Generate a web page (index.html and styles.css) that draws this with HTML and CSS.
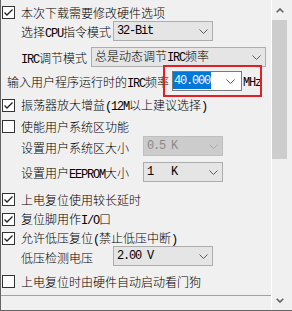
FILE: index.html
```html
<!DOCTYPE html>
<html>
<head>
<meta charset="utf-8">
<link rel="stylesheet" href="styles.css">
</head>
<body>
<div class="win">
  <div class="pane">
    <div class="rows">
      <div class="row chk r1"><svg class="cb" width="13" height="13" viewBox="0 0 13 13"><rect x="0.5" y="0.5" width="12" height="12" class="cb-box"/><polyline points="2.5,6.5 5,9 10.5,3.5" class="cb-mark"/></svg><span class="txt">本次下载需要修改硬件选项</span></div>
      <div class="row sel r2"><span class="lbl w92">选择<span class="lat">CPU</span>指令模式</span><div class="combo cw100"><span class="val lat">32-Bit</span><svg class="chev" width="9" height="5" viewBox="0 0 9 5"><polyline points="0.5,0.5 4.5,4.5 8.5,0.5"/></svg></div></div>
      <div class="row sel r3"><span class="lbl w70"><span class="lat">IRC</span>调节模式</span><div class="combo cw175"><span class="val">总是动态调节<span class="lat">IRC</span>频率</span><svg class="chev" width="9" height="5" viewBox="0 0 9 5"><polyline points="0.5,0.5 4.5,4.5 8.5,0.5"/></svg></div></div>
      <div class="row sel r4"><span class="lbl lbl-freq">输入用户程序运行时的<span class="lat">IRC</span>频率</span><div class="combo edit"><span class="hl lat">40.000</span><svg class="chev chev-edit" width="9" height="5" viewBox="0 0 9 5"><polyline points="0.5,0.5 4.5,4.5 8.5,0.5"/></svg></div><span class="unit lat">MHz</span></div>
      <div class="row chk r5"><svg class="cb" width="13" height="13" viewBox="0 0 13 13"><rect x="0.5" y="0.5" width="12" height="12" class="cb-box"/><polyline points="2.5,6.5 5,9 10.5,3.5" class="cb-mark"/></svg><span class="txt">振荡器放大增益<span class="lat">(12M</span>以上建议选择<span class="lat">)</span></span></div>
      <div class="row chk r6"><svg class="cb" width="13" height="13" viewBox="0 0 13 13"><rect x="0.5" y="0.5" width="12" height="12" class="cb-box"/></svg><span class="txt">使能用户系统区功能</span></div>
      <div class="row sel r7"><span class="lbl w122">设置用户系统区大小</span><div class="combo cw80 disabled"><span class="val lat">0.5 K</span><svg class="chev" width="9" height="5" viewBox="0 0 9 5"><polyline points="0.5,0.5 4.5,4.5 8.5,0.5"/></svg></div></div>
      <div class="row sel r8"><span class="lbl w122">设置用户<span class="lat">EEPROM</span>大小</span><div class="combo cw80"><span class="val lat">1&nbsp;&nbsp;&nbsp;K</span><svg class="chev" width="9" height="5" viewBox="0 0 9 5"><polyline points="0.5,0.5 4.5,4.5 8.5,0.5"/></svg></div></div>
      <div class="row chk r9"><svg class="cb" width="13" height="13" viewBox="0 0 13 13"><rect x="0.5" y="0.5" width="12" height="12" class="cb-box"/><polyline points="2.5,6.5 5,9 10.5,3.5" class="cb-mark"/></svg><span class="txt">上电复位使用较长延时</span></div>
      <div class="row chk r10"><svg class="cb" width="13" height="13" viewBox="0 0 13 13"><rect x="0.5" y="0.5" width="12" height="12" class="cb-box"/><polyline points="2.5,6.5 5,9 10.5,3.5" class="cb-mark"/></svg><span class="txt">复位脚用作<span class="lat">I/O</span>口</span></div>
      <div class="row chk r11"><svg class="cb" width="13" height="13" viewBox="0 0 13 13"><rect x="0.5" y="0.5" width="12" height="12" class="cb-box"/><polyline points="2.5,6.5 5,9 10.5,3.5" class="cb-mark"/></svg><span class="txt">允许低压复位<span class="lat">(</span>禁止低压中断<span class="lat">)</span></span></div>
      <div class="row sel r12"><span class="lbl w92">低压检测电压</span><div class="combo cw100"><span class="val lat">2.00 V</span><svg class="chev" width="9" height="5" viewBox="0 0 9 5"><polyline points="0.5,0.5 4.5,4.5 8.5,0.5"/></svg></div></div>
      <div class="row chk r13"><svg class="cb" width="13" height="13" viewBox="0 0 13 13"><rect x="0.5" y="0.5" width="12" height="12" class="cb-box"/></svg><span class="txt">上电复位时由硬件自动启动看门狗</span></div>
    </div>
    <div class="sep"></div>
  </div>
  <div class="sb">
    <div class="sb-btn sb-up"><svg width="8" height="5" viewBox="0 0 8 5"><polyline points="0.7,4.3 4,1 7.3,4.3"/></svg></div>
    <div class="thumb"></div>
    <div class="track"></div>
    <div class="sb-btn sb-down"><svg width="8" height="5" viewBox="0 0 8 5"><polyline points="0.7,0.7 4,4 7.3,0.7"/></svg></div>
  </div>
  <div class="edge"></div>
  <div class="mark"></div>
</div>
</body>
</html>
```
FILE: styles.css
```css
html, body {
  margin: 0;
  padding: 0;
  background: #f0f0f0;
}
body {
  font-family: "Noto Sans CJK SC", "Noto Sans", sans-serif;
  font-size: 12px;
  font-weight: 300;
  color: #000;
}
.win {
  position: relative;
  width: 292px;
  height: 311px;
  box-sizing: border-box;
  border-left: 1px solid #646464;
  border-bottom: 1px solid #646464;
  display: flex;
  background: #f0f0f0;
  overflow: hidden;
}
.pane {
  width: 270px;
  display: flex;
  flex-direction: column;
}
.rows {
  flex: 1;
  display: flex;
  flex-direction: column;
}
.row {
  display: flex;
  align-items: center;
  white-space: nowrap;
  line-height: 14px;
}
.chk { height: 13px; padding-left: 1px; }
.sel { height: 20px; }
.r1 { margin-top: 6px; }
.r2 { margin-top: 2px; }
.r3 { margin-top: 6px; }
.r4 { margin-top: 4px; }
.r5 { margin-top: 8px; }
.r6 { margin-top: 8px; }
.r7 { margin-top: 3px; }
.r8 { margin-top: 6px; }
.r9 { margin-top: 11px; }
.r10 { margin-top: 7px; }
.r11 { margin-top: 6px; }
.r12 { margin-top: 1px; }
.r13 { margin-top: 9px; }

.cb { flex: none; }
.cb-box { fill: #fff; stroke: #333; stroke-width: 1; }
.cb-mark { fill: none; stroke: #222; stroke-width: 1.3; }
.txt { margin-left: 6px; }

.lat {
  font-family: "Liberation Mono", "DejaVu Sans Mono", monospace;
  font-size: 12px;
  font-weight: 400;
  letter-spacing: -1.2px;
}

.lbl {
  box-sizing: border-box;
  padding-left: 20px;
  padding-top: 3px;
  flex: none;
}
.w92 { width: 112px; }
.w70 { width: 90px; }
.w122 { width: 142px; }
.lbl-freq { padding-left: 6px; width: 171px; }

.combo {
  box-sizing: border-box;
  height: 20px;
  border: 1px solid #adadad;
  background: #e5e5e5;
  display: flex;
  align-items: center;
  padding-left: 3px;
  flex: none;
}
.cw100 { width: 100px; }
.cw175 { width: 175px; }
.cw80 { width: 80px; }
.combo.disabled {
  background: #cccccc;
  border-color: #bfbfbf;
  color: #8a8a8a;
}
.combo.disabled .chev polyline { stroke: #a8a8a8; }
.chev { margin-left: auto; margin-right: 4px; flex: none; }
.chev polyline { fill: none; stroke: #5a5a5a; stroke-width: 1; }

.combo.edit {
  width: 70px;
  background: #fff;
  border-color: #7a7a7a;
  padding-left: 0;
  align-items: stretch;
}
.hl {
  background: #0078d7;
  color: #fff;
  width: 38px;
  box-sizing: border-box;
  padding-left: 1px;
  margin: 0 0 1px 0;
  display: flex;
  align-items: center;
}
.chev-edit { align-self: center; margin-right: 6px; }
.unit { margin-left: 1px; padding-top: 3px; }

.sep {
  height: 14px;
  border-top: 1px solid #a0a0a0;
}

.sb {
  width: 17px;
  box-sizing: border-box;
  border-left: 1px solid #ffffff;
  display: flex;
  flex-direction: column;
}
.sb-btn {
  height: 20px;
  display: flex;
  align-items: center;
  justify-content: center;
  padding-right: 1px;
}
.sb-btn polyline { fill: none; stroke: #606060; stroke-width: 1.6; }
.thumb {
  height: 139px;
  background: #cdcdcd;
  margin-right: 1px;
}
.track { flex: 1; }
.edge { width: 4px; }

.mark {
  position: absolute;
  left: 162px;
  top: 65px;
  width: 99px;
  height: 32px;
  box-sizing: border-box;
  border: 2px solid #e31e24;
}
```
